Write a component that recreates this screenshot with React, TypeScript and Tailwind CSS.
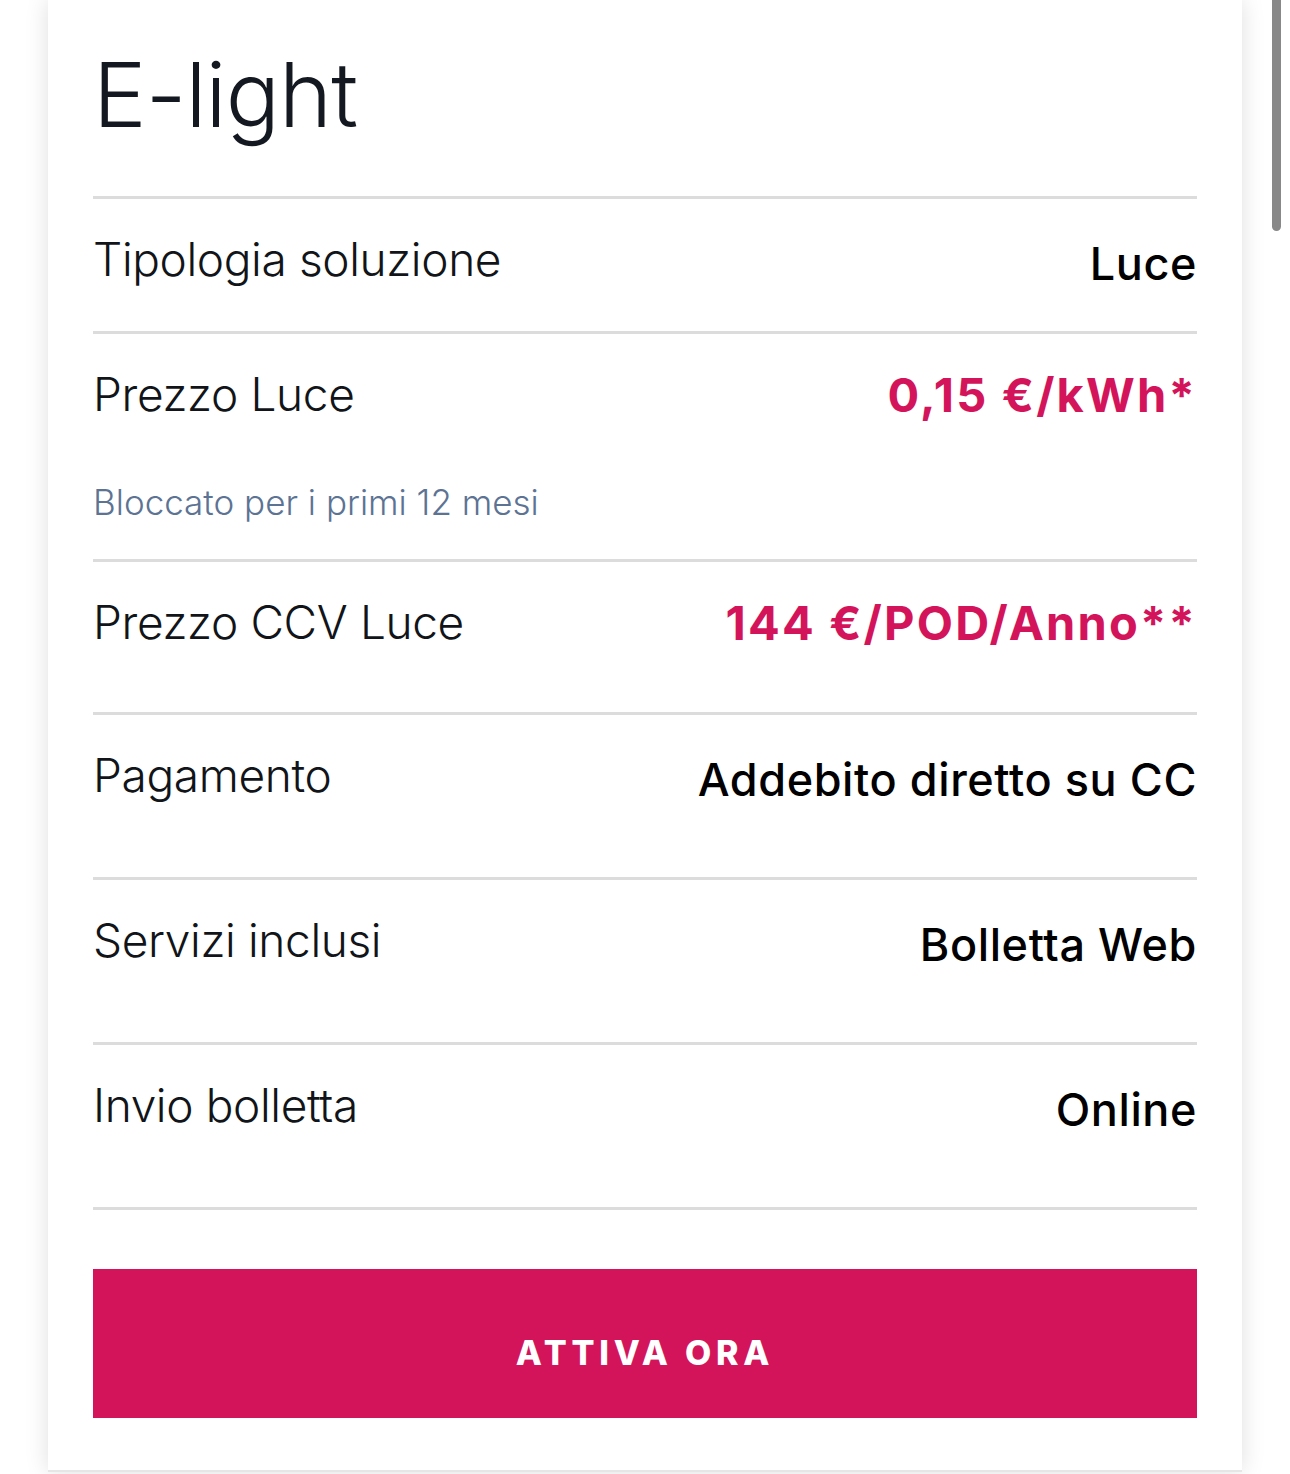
import type React from "react";

type Row = {
  label: string;
  value: string;
  accent?: boolean;
  note?: string;
  h: string;
};

const rows: Row[] = [
  { label: "Tipologia soluzione", value: "Luce", h: "h-[135px]" },
  {
    label: "Prezzo Luce",
    value: "0,15 €/kWh*",
    accent: true,
    note: "Bloccato per i primi 12 mesi",
    h: "h-[228px]",
  },
  { label: "Prezzo CCV Luce", value: "144 €/POD/Anno**", accent: true, h: "h-[153px]" },
  { label: "Pagamento", value: "Addebito diretto su CC", h: "h-[165px]" },
  { label: "Servizi inclusi", value: "Bolletta Web", h: "h-[165px]" },
  { label: "Invio bolletta", value: "Online", h: "h-[165px]" },
];

const OfferRow: React.FC<{ row: Row }> = ({ row }) => (
  <div className={`${row.h} border-t-[3px] border-[#dcdcdc] pt-[37px]`}>
    <div className="flex items-start justify-between">
      <span className="text-[46px] leading-none font-light text-[#111418] tracking-[-0.008em]">
        {row.label}
      </span>
      {row.accent ? (
        <span className="text-[47px] leading-none font-bold text-[#d4145a] tracking-[0.047em]">
          {row.value}
        </span>
      ) : (
        <span className="mt-[5px] text-[45px] leading-none font-medium text-black tracking-[0.013em]">
          {row.value}
        </span>
      )}
    </div>
    {row.note && (
      <div className="mt-[67px] text-[35px] leading-none font-light text-[#5c7394]">
        {row.note}
      </div>
    )}
  </div>
);

export default function App() {
  return (
    <div
      className="relative min-h-[1474px] w-full overflow-hidden bg-white"
      style={{ fontFamily: "Inter, 'Noto Sans', sans-serif" }}
    >
      <div className="ml-[48px] w-[1194px] h-[1472px] bg-white border-b-2 border-[#e6e6e6] shadow-[0_0_22px_rgba(0,0,0,0.13)] px-[45px] pt-[50px]">
        <h1 className="text-[90px] leading-none font-light text-[#141820] tracking-[-0.01em]">
          E-light
        </h1>
        <div className="mt-[56px]">
          {rows.map((r) => (
            <OfferRow key={r.label} row={r} />
          ))}
          <div className="border-t-[3px] border-[#dcdcdc]" />
        </div>
        <button className="mt-[59px] flex h-[149px] w-full items-center justify-center bg-[#d4145a] pt-[17px] text-[34px] font-extrabold tracking-[0.14em] text-white">
          ATTIVA ORA
        </button>
      </div>
      <div className="absolute left-[1272px] top-0 h-[231px] w-[9px] rounded-b-full bg-[#888888]" />
    </div>
  );
}
